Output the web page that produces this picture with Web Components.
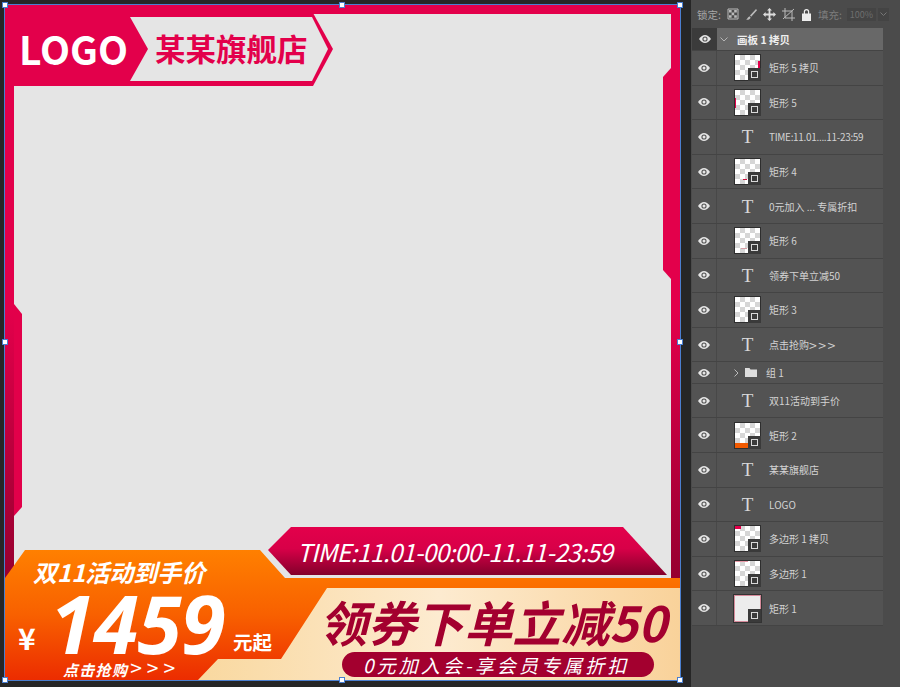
<!DOCTYPE html>
<html lang="zh">
<head>
<meta charset="utf-8">
<title>画板 1 拷贝</title>
<style>
  html, body { margin: 0; height: 100%; background: #262626; overflow: hidden; }
  body { display: flex; width: 900px; height: 687px; font-family: "Noto Sans CJK SC", "Noto Sans", sans-serif; }
</style>
</head>
<body>
<ps-stage></ps-stage>
<ps-panel>
  <ps-options></ps-options>
  <layer-group>画板 1 拷贝</layer-group>
  <layer-row mark="23,6,2,12,#e3004b">矩形 5 拷贝</layer-row>
  <layer-row mark="0,8,1,10,#e3004b">矩形 5</layer-row>
  <layer-row kind="text" tight>TIME:11.01....11-23:59</layer-row>
  <layer-row mark="8,20,4,1,#d0103f">矩形 4</layer-row>
  <layer-row kind="text">0元加入 ... 专属折扣</layer-row>
  <layer-row mark="6,20,6,1,#d9a0a8">矩形 6</layer-row>
  <layer-row kind="text">领券下单立减50</layer-row>
  <layer-row mark="14,16,4,1,#d0103f">矩形 3</layer-row>
  <layer-row kind="text">点击抢购<span style="font-size:14px;letter-spacing:1.5px">&gt;&gt;&gt;</span></layer-row>
  <layer-row kind="folder">组 1</layer-row>
  <layer-row kind="text">双11活动到手价</layer-row>
  <layer-row mark="0,20,13,5,#f25a00">矩形 2</layer-row>
  <layer-row kind="text">某某旗舰店</layer-row>
  <layer-row kind="text">LOGO</layer-row>
  <layer-row mark="0,0,6,3,#e3004b">多边形 1 拷贝</layer-row>
  <layer-row mark="0,0,13,1,#e89aa8">多边形 1</layer-row>
  <layer-row kind="base">矩形 1</layer-row>
</ps-panel>

<script>
// Artboard: shapes are one svg, the words sit over it as real text
const stageTemplate = document.createElement("template");
stageTemplate.innerHTML = `
  <style>
    :host { display: block; position: relative; width: 691px; height: 687px; flex: none; background: #262626; overflow: hidden; }
    svg { position: absolute; left: 0; top: 0; }
    .t { position: absolute; white-space: nowrap; font-family: "Noto Sans CJK SC", "Noto Sans", sans-serif; line-height: 1; }
    .logo { left: 19px; top: 29px; font-size: 39px; font-weight: 700; color: #fff; }
    .shop { left: 155px; top: 33px; font-size: 30.5px; font-weight: 700; color: #e3004b; }
    .time { left: 297px; top: 540px; font-size: 24.5px; font-style: italic; color: #fff; letter-spacing: -0.65px; }
    .promo { left: 33px; top: 560px; font-size: 24px; font-weight: 700; font-style: italic; color: #fff; }
    .yen { left: 18px; top: 622px; font-size: 30px; font-weight: 700; color: #fff; }
    .price { left: 50px; top: 592px; font-family: "Noto Sans", sans-serif; font-size: 81px; line-height: 62px; font-weight: 700; font-style: italic; color: #fff; letter-spacing: -1px; }
    .from { left: 233px; top: 632px; font-size: 19.5px; font-weight: 700; color: #fff; }
    .buy { left: 63px; top: 660px; font-size: 15px; font-weight: 700; font-style: italic; color: #fff; letter-spacing: 1.3px; }
    .buy b { font-size: 21px; font-weight: 400; font-style: normal; letter-spacing: 5px; margin-left: 2px; line-height: 14px; }
    .coupon { left: 319px; top: 597px; font-size: 48.4px; font-weight: 700; font-style: italic; color: #a3002f; }
    .join { left: 363px; top: 655px; font-size: 19px; font-style: italic; color: #fff; letter-spacing: 3.1px; }
  </style>
  <svg width="691" height="687" viewBox="0 0 691 687">
    <defs>
      <linearGradient id="frame" x1="0" y1="0" x2="0" y2="1">
        <stop offset="0" stop-color="#e3004b"/>
        <stop offset=".45" stop-color="#e3004b"/>
        <stop offset=".85" stop-color="#96002f"/>
        <stop offset="1" stop-color="#8a002e"/>
      </linearGradient>
      <linearGradient id="time" x1="0" y1="0" x2="0" y2="1">
        <stop offset="0" stop-color="#e3004b"/>
        <stop offset=".45" stop-color="#d80048"/>
        <stop offset="1" stop-color="#83002b"/>
      </linearGradient>
      <linearGradient id="orange" gradientUnits="userSpaceOnUse" x1="0" y1="550" x2="0" y2="680">
        <stop offset="0" stop-color="#ff8000"/>
        <stop offset=".5" stop-color="#f86000"/>
        <stop offset="1" stop-color="#ec2c00"/>
      </linearGradient>
      <linearGradient id="cream" x1="0" y1="0" x2="1" y2="0">
        <stop offset="0" stop-color="#f9d89f"/>
        <stop offset=".5" stop-color="#fdebd0"/>
        <stop offset="1" stop-color="#f9d29a"/>
      </linearGradient>
    </defs>
    <rect x="5" y="5" width="675" height="675" fill="url(#frame)"/>
    <rect x="14" y="14" width="657" height="570" fill="#e5e5e5"/>
    <!-- side tabs -->
    <path d="M671 68 663 77V270L671 279Z" fill="#e3004b"/>
    <path d="M14 304 22 314V507L14 516Z" fill="#e2004a"/>
    <!-- logo corner -->
    <path d="M14 13H313L333 49 313 86H14Z" fill="#e3004b"/>
    <path d="M130 17H312L328 49 312 81H130L148 49Z" fill="#e5e5e5"/>
    <!-- time banner -->
    <path d="M268 550 291 527H623L667 575H291Z" fill="url(#time)"/>
    <!-- bottom bars -->
    <path d="M5 578 25 550H260L285 578H680V680H5Z" fill="url(#orange)"/>
    <path d="M327 588H680V680H198L218 659H281Z" fill="url(#cream)"/>
    <rect x="342" y="652" width="312" height="25" rx="12.5" fill="#a3002f"/>
    <!-- selection outline and handles -->
    <rect x="4.5" y="4.5" width="676" height="676" fill="none" stroke="#4a7fd0"/>
    <g fill="#fff" stroke="#4a7fd0">
      <rect x="2.5" y="2.5" width="5" height="5"/><rect x="339.5" y="2.5" width="5" height="5"/><rect x="677.5" y="2.5" width="5" height="5"/>
      <rect x="2.5" y="339.5" width="5" height="5"/><rect x="677.5" y="339.5" width="5" height="5"/>
      <rect x="2.5" y="677.5" width="5" height="5"/><rect x="339.5" y="677.5" width="5" height="5"/><rect x="677.5" y="677.5" width="5" height="5"/>
    </g>
  </svg>
  <span class="t logo">LOGO</span>
  <span class="t shop">某某旗舰店</span>
  <span class="t time">TIME:11.01-00:00-11.11-23:59</span>
  <span class="t promo">双11活动到手价</span>
  <span class="t yen">¥</span>
  <span class="t price">1459</span>
  <span class="t from">元起</span>
  <span class="t buy">点击抢购<b>&gt;&gt;&gt;</b></span>
  <span class="t coupon">领券下单立减50</span>
  <span class="t join">0元加入会-享会员专属折扣</span>
`;

class PsStage extends HTMLElement {
  constructor() {
    super();
    this.attachShadow({ mode: "open" });
    this.shadowRoot.appendChild(stageTemplate.content.cloneNode(true));
  }
}

class PsPanel extends HTMLElement {
  constructor() {
    super();
    this.attachShadow({ mode: "open" }).innerHTML = `
      <style>
        :host { display: flex; flex-direction: column; width: 209px; height: 687px; flex: none; background: #4b4b4b; box-sizing: border-box; padding-left: 1px; }
        .list { display: flex; flex-direction: column; width: 191px; }
      </style>
      <slot name="options"></slot>
      <div class="list"><slot></slot></div>
    `;
  }
  connectedCallback() {
    const bar = this.querySelector("ps-options");
    if (bar) bar.slot = "options";
  }
}

// Lock / fill strip above the layer list
class PsOptions extends HTMLElement {
  constructor() {
    super();
    this.attachShadow({ mode: "open" }).innerHTML = `
      <style>
        :host { display: flex; align-items: center; height: 28px; box-sizing: border-box; padding: 0 0 0 5px; color: #a8a8a8; font-size: 10.5px; }
        svg { display: block; flex: none; }
        .icons { display: flex; align-items: center; gap: 6px; margin-left: 6px; }
        .fill { margin-left: 6px; color: #7d7d7d; }
        .box { margin-left: 5px; width: 29px; height: 13px; background: #444; color: #6e6e6e; font-size: 9px; line-height: 13px; text-align: center; }
        .drop { margin-left: 2px; width: 11px; height: 13px; background: #444; display: flex; align-items: center; justify-content: center; }
      </style>
      <span>锁定:</span>
      <div class="icons">
        <svg width="12" height="12" viewBox="0 0 12 12" fill="#bbb"><path d="M1 1h10v10H1z" fill="none" stroke="#bbb"/><path d="M2 2h2.600v2.600H2zM7.200 2h2.600v2.600H7.200zM4.600 4.600h2.600v2.600H4.600zM2 7.200h2.600v2.600H2zM7.200 7.200h2.600v2.600H7.200z"/></svg>
        <svg width="12" height="13" viewBox="0 0 12 13" fill="#bbb"><path d="M11 1 5 7.500l1.200 1.200L12 2.200zM4.400 8.200 3 9.400c-.6.6-.7 1.600-2 2.100 1.500.6 3.200.3 4.200-1.100l.4-1z"/></svg>
        <svg width="13" height="13" viewBox="0 0 13 13" fill="#ddd"><path d="M6.500 0 9 2.600H7.400v3h3V4L13 6.500 10.400 9V7.400h-3v3H9L6.500 13 4 10.400h1.600v-3h-3V9L0 6.500 2.600 4v1.600h3v-3H4z"/></svg>
        <svg width="13" height="13" viewBox="0 0 13 13" fill="none" stroke="#bbb"><path d="M3 0v10h10M0 3h10v10M1 11 12 1"/></svg>
        <svg width="11" height="13" viewBox="0 0 11 13" fill="#eee"><path d="M1 5.500h9V13H1zM2.800 5.500V3.600a2.700 2.700 0 0 1 5.400 0v1.900H7V3.700a1.500 1.500 0 0 0-3 0v1.800z"/></svg>
      </div>
      <span class="fill">填充:</span>
      <span class="box">100%</span>
      <span class="drop"><svg width="7" height="4" viewBox="0 0 7 4" fill="none" stroke="#777"><path d="M.5.5 3.500 3.500 6.500.5"/></svg></span>
    `;
  }
}

const EYE = `<svg width="12" height="8" viewBox="0 0 12 8"><path d="M0 4C2 1.400 3.800 0 6 0s4 1.400 6 4c-2 2.600-3.800 4-6 4S2 6.600 0 4z" fill="#e6e6e6"/><circle cx="6" cy="4" r="2.600" fill="#555"/><circle cx="6" cy="4" r="1.500" fill="#e6e6e6"/></svg>`;

class LayerGroup extends HTMLElement {
  constructor() {
    super();
    this.attachShadow({ mode: "open" }).innerHTML = `
      <style>
        :host { display: flex; height: 23px; box-sizing: border-box; border-bottom: 1px solid #444; color: #eee; font-size: 10.5px; font-weight: 700; }
        .eye { width: 25px; flex: none; display: flex; align-items: center; justify-content: center; background: #3b3b3b; }
        .body { flex: 1; display: flex; align-items: center; background: #686868; padding-left: 3px; }
        .body svg { margin-right: 9px; }
      </style>
      <div class="eye">${EYE}</div>
      <div class="body">
        <svg width="8" height="5" viewBox="0 0 8 5" fill="none" stroke="#b5b5b5"><path d="M.5.500 4 4 7.500.500"/></svg>
        <slot></slot>
      </div>
    `;
  }
}

class LayerRow extends HTMLElement {
  constructor() {
    super();
    const kind = this.getAttribute("kind") || "shape";
    this.attachShadow({ mode: "open" }).innerHTML = `
      <style>
        :host { display: flex; height: ${kind === "folder" ? 21.4 : 34.6}px; box-sizing: border-box; border-bottom: 1px solid #444; background: #535353; color: #d2d2d2; font-size: 10px; }
        :host([tight]) { letter-spacing: -0.32px; }
        .eye { width: 25px; flex: none; display: flex; align-items: center; justify-content: center; border-right: 1px solid #484848; box-sizing: border-box; }
        .body { flex: 1; display: flex; align-items: center; min-width: 0; white-space: nowrap; }
        .icon { width: 52px; flex: none; display: flex; align-items: center; box-sizing: border-box; padding-left: 17px; }
        .tee { width: 27px; text-align: center; font: 19px/1 "Liberation Serif", serif; color: #d8d8d8; }
        .fold { gap: 6px; padding-left: 17px; width: 49px; }
        .thumb { position: relative; width: 27px; height: 27px; box-sizing: border-box; border: 1px solid #2e2e2e;
          background: repeating-conic-gradient(#d6d6d6 0 25%, #fff 0 50%) 0 0 / 10px 10px; }
        .thumb.base { background: #ececec; border-color: #d68a9a; outline: 1px solid #333; }
        .thumb svg.badge { position: absolute; right: -1px; bottom: -1px; }
        .thumb svg.art { position: absolute; left: 0; top: 0; }
      </style>
      <div class="eye">${EYE}</div>
      <div class="body">${this.iconMarkup(kind)}<slot></slot></div>
    `;
  }

  iconMarkup(kind) {
    if (kind === "text") return `<div class="icon"><span class="tee">T</span></div>`;
    if (kind === "folder") {
      return `<div class="icon fold">
        <svg width="5" height="8" viewBox="0 0 5 8" fill="none" stroke="#bbb"><path d="M.5.500 4 4 .5 7.500"/></svg>
        <svg width="12" height="9" viewBox="0 0 12 9" fill="#ddd"><path d="M0 0h4.500l1 1.500H12V9H0z"/></svg>
      </div>`;
    }
    const badge = `<svg class="badge" width="13" height="13" viewBox="0 0 13 13"><rect width="13" height="13" fill="#3a3a3a"/><rect x="3.500" y="3.500" width="6" height="6" fill="none" stroke="#d8d8d8"/></svg>`;
    const mark = (this.getAttribute("mark") || "").split(",");
    const art = mark.length === 5
      ? `<svg class="art" width="25" height="25" viewBox="0 0 25 25"><rect x="${mark[0]}" y="${mark[1]}" width="${mark[2]}" height="${mark[3]}" fill="${mark[4]}"/></svg>`
      : "";
    return `<div class="icon"><div class="thumb ${kind === "base" ? "base" : ""}">${art}${badge}</div></div>`;
  }
}

customElements.define("ps-stage", PsStage);
customElements.define("ps-panel", PsPanel);
customElements.define("ps-options", PsOptions);
customElements.define("layer-group", LayerGroup);
customElements.define("layer-row", LayerRow);
</script>
</body>
</html>
